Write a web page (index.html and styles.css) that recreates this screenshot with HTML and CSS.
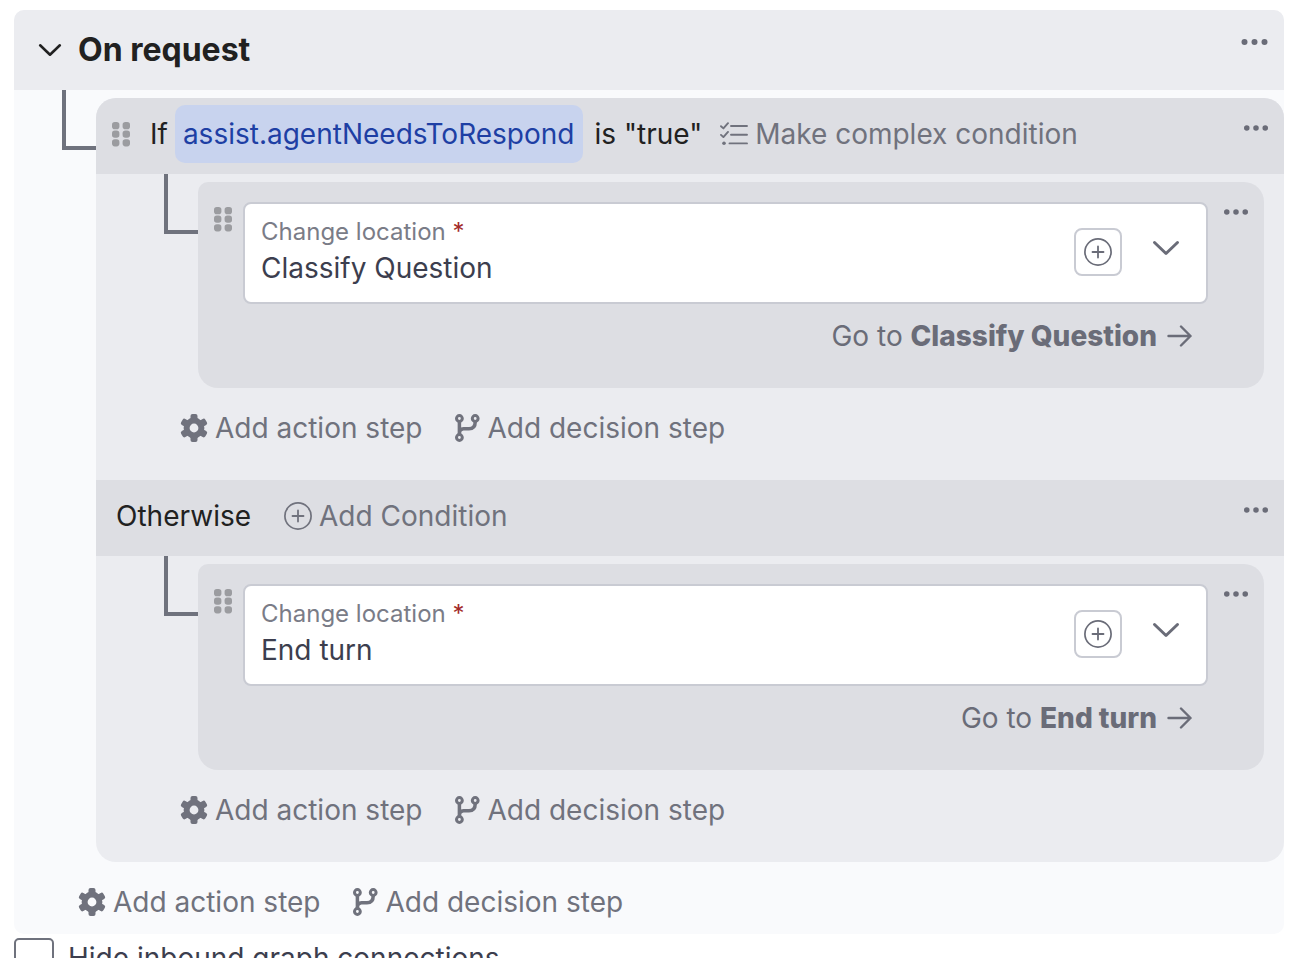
FILE: index.html
```html
<!DOCTYPE html>
<html lang="en">
<head>
    <meta charset="UTF-8">
    <meta name="viewport" content="width=device-width, initial-scale=1.0">
    <title>On request</title>
    <link rel="stylesheet" href="styles.css">
</head>
<body>
    <!-- shared icons -->
    <svg class="sprite" aria-hidden="true">
        <symbol id="dots" viewBox="0 0 26 6">
            <circle cx="3" cy="3" r="3"/><circle cx="13" cy="3" r="3"/><circle cx="23" cy="3" r="3"/>
        </symbol>
        <symbol id="grip" viewBox="0 0 18 26">
            <rect x="0" y="1" width="7.4" height="7.2" rx="2.8"/><rect x="10.6" y="1" width="7.4" height="7.2" rx="2.8"/>
            <rect x="0" y="9.6" width="7.4" height="7.2" rx="2.8"/><rect x="10.6" y="9.6" width="7.4" height="7.2" rx="2.8"/>
            <rect x="0" y="18.2" width="7.4" height="7.2" rx="2.8"/><rect x="10.6" y="18.2" width="7.4" height="7.2" rx="2.8"/>
        </symbol>
        <symbol id="chevron" viewBox="0 0 28 16">
            <path d="M2.5 2.5 14 13.5 25.5 2.5" fill="none" stroke="currentColor" stroke-width="3" stroke-linecap="round" stroke-linejoin="round"/>
        </symbol>
        <symbol id="plus" viewBox="0 0 28 28">
            <path d="M14 8.5v11M8.5 14h11" fill="none" stroke="currentColor" stroke-width="1.8" stroke-linecap="round"/>
            <circle cx="14" cy="14" r="13.1" fill="none" stroke="currentColor" stroke-width="1.7"/>
        </symbol>
        <symbol id="arrow" viewBox="0 0 26 22">
            <path d="M1.5 11h22M14 1.5 23.5 11 14 20.5" fill="none" stroke="currentColor" stroke-width="2.4" stroke-linecap="round" stroke-linejoin="round"/>
        </symbol>
        <symbol id="checks" viewBox="0 0 28 24">
            <g fill="none" stroke="currentColor" stroke-width="1.9" stroke-linecap="round" stroke-linejoin="round">
                <path d="M11 4h16M11 12.7h16M9.5 21.4h17.5"/>
                <path d="M1 4.2 3.4 6.4 8 1.2M1 12.9 3.4 15.1 8 9.9"/>
            </g>
            <circle cx="4" cy="21.2" r="1.8"/>
        </symbol>
        <symbol id="gear" viewBox="0 0 28 28">
            <circle cx="14" cy="14" r="7.4" fill="none" stroke="currentColor" stroke-width="6"/>
            <rect x="10.5" y="0" width="7" height="8" rx="2"/>
            <rect x="10.5" y="0" width="7" height="8" rx="2" transform="rotate(60 14 14)"/>
            <rect x="10.5" y="0" width="7" height="8" rx="2" transform="rotate(120 14 14)"/>
            <rect x="10.5" y="0" width="7" height="8" rx="2" transform="rotate(180 14 14)"/>
            <rect x="10.5" y="0" width="7" height="8" rx="2" transform="rotate(240 14 14)"/>
            <rect x="10.5" y="0" width="7" height="8" rx="2" transform="rotate(300 14 14)"/>
        </symbol>
        <symbol id="branch" viewBox="0 0 25 28">
            <g fill="none" stroke="currentColor" stroke-width="3">
                <circle cx="4.400" cy="4.500" r="2.900"/><circle cx="20.200" cy="4.500" r="2.900"/><circle cx="4.400" cy="23.500" r="2.900"/>
                <path d="M4.400 7.400v13.200M4.400 19Q4.400 14.700 8.500 14.700H14Q20.200 14.700 20.200 8V7.400" stroke-width="3.500"/>
            </g>
        </symbol>
    </svg>

    <section class="panel">
        <header class="panel-head">
            <button class="toggle" aria-label="Collapse"><svg class="toggle-icon"><use href="#chevron"/></svg></button>
            <h2>On request</h2>
            <button class="more more-lg" aria-label="More options"><svg><use href="#dots"/></svg></button>
        </header>

        <div class="branch">
            <div class="line"></div>
            <div class="block">
                <div class="cond">
                    <svg class="grip"><use href="#grip"/></svg>
                    <span class="cond-if">If</span>
                    <span class="pill">assist.agentNeedsToRespond</span>
                    <span class="cond-is">is "true"</span>
                    <button class="link"><svg class="icon-checks"><use href="#checks"/></svg>Make complex condition</button>
                    <button class="more" aria-label="More options"><svg><use href="#dots"/></svg></button>
                </div>
                <div class="branch branch-inner">
                    <div class="line"></div>
                    <div class="card">
                        <svg class="grip"><use href="#grip"/></svg>
                        <div class="card-main">
                            <div class="field">
                                <div class="field-text">
                                    <label for="location-1">Change location <b>*</b></label>
                                    <select id="location-1" required>
                                        <option>Classify Question</option>
                                        <option>End turn</option>
                                    </select>
                                </div>
                                <button class="add" aria-label="Add location"><svg><use href="#plus"/></svg></button>
                                <svg class="field-arrow"><use href="#chevron"/></svg>
                            </div>
                            <a class="goto" href="#classify-question"><span>Go to <strong>Classify Question</strong></span><svg><use href="#arrow"/></svg></a>
                        </div>
                        <button class="more" aria-label="More options"><svg><use href="#dots"/></svg></button>
                    </div>
                </div>
                <div class="steps steps-inner">
                    <button class="link"><svg class="icon-gear"><use href="#gear"/></svg>Add action step</button>
                    <button class="link"><svg class="icon-branch"><use href="#branch"/></svg>Add decision step</button>
                </div>

                <div class="cond cond-else">
                    <span>Otherwise</span>
                    <button class="link"><svg class="icon-plus"><use href="#plus"/></svg>Add Condition</button>
                    <button class="more" aria-label="More options"><svg><use href="#dots"/></svg></button>
                </div>
                <div class="branch branch-inner">
                    <div class="line"></div>
                    <div class="card">
                        <svg class="grip"><use href="#grip"/></svg>
                        <div class="card-main">
                            <div class="field">
                                <div class="field-text">
                                    <label for="location-2">Change location <b>*</b></label>
                                    <select id="location-2" required>
                                        <option>End turn</option>
                                        <option>Classify Question</option>
                                    </select>
                                </div>
                                <button class="add" aria-label="Add location"><svg><use href="#plus"/></svg></button>
                                <svg class="field-arrow"><use href="#chevron"/></svg>
                            </div>
                            <a class="goto" href="#end-turn"><span>Go to <strong>End turn</strong></span><svg><use href="#arrow"/></svg></a>
                        </div>
                        <button class="more" aria-label="More options"><svg><use href="#dots"/></svg></button>
                    </div>
                </div>
                <div class="steps steps-inner">
                    <button class="link"><svg class="icon-gear"><use href="#gear"/></svg>Add action step</button>
                    <button class="link"><svg class="icon-branch"><use href="#branch"/></svg>Add decision step</button>
                </div>
            </div>
        </div>

        <div class="steps">
            <button class="link"><svg class="icon-gear"><use href="#gear"/></svg>Add action step</button>
            <button class="link"><svg class="icon-branch"><use href="#branch"/></svg>Add decision step</button>
        </div>
    </section>

    <div class="option">
        <input type="checkbox" id="hide-inbound">
        <label for="hide-inbound">Hide inbound graph connections</label>
    </div>
</body>
</html>
```
FILE: styles.css
```css
*{box-sizing: border-box;margin: 0;padding: 0;}
html{
    scrollbar-width: none;
}
body{
    padding: 10px 14px 0;
    background: #fff;color: #212121;
    font: 28px/36px Inter, "Liberation Sans", sans-serif;
}
button, select{
    font: inherit;color: inherit;
    background: none;border: 0;cursor: pointer;
}
svg{
    display: block;flex: none;fill: currentColor;
}
.sprite{
    position: absolute;width: 0;height: 0;
}

/* panel */
.panel{
    background: #f9fafc;border-radius: 10px;
    overflow: hidden;
}
.panel-head{
    display: flex;align-items: center;
    height: 80px;padding: 0 16px 0 24px;
    background: #ebecf0;
}
.panel-head h2{
    margin-left: 16px;
    font-size: 32px;line-height: 40px;font-weight: 700;
}
.toggle-icon{
    width: 24px;height: 14px;
}

/* three dots menu */
.more{
    align-self: flex-start;margin-left: auto;
    padding: 8px 0;color: #6a6c78;
}
.more svg{
    width: 24px;height: 6px;
}
.more-lg{
    padding: 29px 0;
}
.more-lg svg{
    width: 27px;
}

/* connector line + nested content */
.branch{
    display: flex;align-items: flex-start;
    padding-left: 48px;
}
.branch-inner{
    padding: 0 20px 0 68px;
}
.line{
    flex: none;width: 34px;height: 60px;
    border: solid #6f727d;border-width: 0 0 4px 4px;
}
.block{
    flex: 1;min-width: 0;margin-top: 8px;
    background: #ebecf0;border-radius: 20px;
    overflow: hidden;
}

/* condition bar */
.cond{
    display: flex;align-items: center;
    height: 76px;padding: 0 16px 4px;
    background: #dddee3;
}
.cond .more{
    padding: 27px 0;
}
.cond-if{
    margin: 0 7px 0 20px;
}
.pill{
    padding: 11px 8px;
    background: #c8d3ee;color: #1e3fa4;
    border-radius: 10px;
}
.cond-is{
    margin: 0 18px 0 12px;
}
.cond-else{
    padding-left: 20px;
}
.cond-else .link{
    margin-left: 33px;
}
.grip{
    width: 18px;height: 26px;color: #9b9ca0;
}

/* text buttons */
.link{
    display: flex;align-items: center;gap: 7px;
    color: #70727d;white-space: nowrap;
}
.icon-checks{
    width: 28px;height: 24px;
}
.icon-gear, .icon-plus{
    width: 28px;height: 28px;
}
.icon-branch{
    width: 25px;height: 28px;
}
.steps{
    display: flex;gap: 33px;
    padding: 22px 64px 14px;
}
.steps-inner{
    padding: 22px 84px 34px;
}

/* step card */
.card{
    display: flex;align-items: flex-start;
    flex: 1;min-width: 0;
    margin-top: 8px;padding: 20px 16px 34px;
    background: #dddee3;border-radius: 10px 20px 20px 20px;
}
.card .grip{
    margin: 4px 11px 0 0;
}
.card .more{
    margin: -1px 0 0 16px;
}
.card-main{
    flex: 1;min-width: 0;
}
.field{
    display: flex;align-items: center;
    height: 102px;padding: 0 26px 2px 16px;
    background: #fff;border: 2px solid #c9cbd3;border-radius: 8px;
}
.field-text{
    flex: 1;min-width: 0;
}
.field label{
    display: block;
    font-size: 24px;line-height: 32px;color: #7a7c87;
}
.field label b{
    color: #a32a2a;font-weight: 400;
}
.field select{
    display: block;width: 100%;height: 40px;
    color: #3c3e4e;appearance: none;
}
.add{
    padding: 8px;color: #6a6c78;
    border: 2px solid #c9cbd3;border-radius: 8px;
}
.add svg{
    width: 28px;height: 28px;
}
.field-arrow{
    width: 28px;height: 16px;
    margin: 0 0 8px 30px;color: #6a6c78;
}
.goto{
    display: flex;align-items: center;justify-content: flex-end;gap: 10px;
    margin: 14px 15px 0 0;
    color: #6a6c78;text-decoration: none;
}
.goto strong{
    font-weight: 800;
}
.goto svg{
    width: 26px;height: 22px;
}

/* checkbox row */
.option{
    display: flex;align-items: center;gap: 14px;
    margin-top: 4px;color: #3c3e4e;
}
.option input{
    width: 40px;height: 40px;
    appearance: none;
    border: 2px solid #6f727d;border-radius: 5px;
}
```
